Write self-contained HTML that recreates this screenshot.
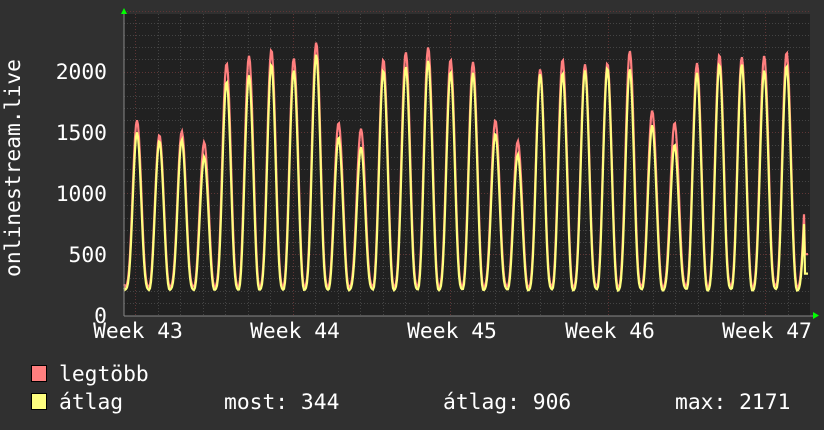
<!DOCTYPE html>
<html><head><meta charset="utf-8"><style>
html,body{margin:0;padding:0;background:#303030;width:824px;height:430px;overflow:hidden}
svg{display:block}
text{font-family:"DejaVu Sans Mono","Liberation Mono",monospace;fill:#fff;font-size:21.3px}
</style></head><body>
<svg id="g" width="824" height="430" xmlns="http://www.w3.org/2000/svg">
<rect x="0" y="0" width="824" height="430" fill="#303030"/>
<rect x="124" y="14" width="686" height="302" fill="#212121"/>
<g id="grid"></g>
<polyline id="red" fill="none" stroke="#ff7f7f" stroke-width="2.2"/>
<polyline id="yel" fill="none" stroke="#ffff7f" stroke-width="2.2"/>
<line x1="124" y1="316" x2="814" y2="316" stroke="#888" stroke-width="1"/>
<line x1="124" y1="316" x2="124" y2="12" stroke="#888" stroke-width="1"/>
<polygon points="121,14 127,14 124,8" fill="#0f0"/>
<polygon points="813,312 813,319 819,315.5" fill="#0f0"/>
<text x="107" y="79" text-anchor="end">2000</text>
<text x="107" y="140" text-anchor="end">1500</text>
<text x="107" y="201" text-anchor="end">1000</text>
<text x="107" y="262" text-anchor="end">500</text>
<text x="107" y="323" text-anchor="end">0</text>
<text transform="translate(20,168) rotate(-90)" text-anchor="middle">onlinestream.live</text>
<text x="138" y="338" text-anchor="middle">Week 43</text>
<text x="295" y="338" text-anchor="middle">Week 44</text>
<text x="452" y="338" text-anchor="middle">Week 45</text>
<text x="610" y="338" text-anchor="middle">Week 46</text>
<text x="767" y="338" text-anchor="middle">Week 47</text>
<rect x="31.5" y="365.5" width="15" height="16" fill="#ff7f7f" stroke="#000"/>
<rect x="31.5" y="393.5" width="15" height="16" fill="#ffff7f" stroke="#000"/>
<text x="59" y="381">legtöbb</text>
<text x="59" y="409">átlag</text>
<text x="224" y="409">most: 344</text>
<text x="443" y="409">átlag: 906</text>
<text x="675" y="409">max: 2171</text>
</svg>
<script>
var ns="http://www.w3.org/2000/svg",g=document.getElementById('grid');
function ln(x1,y1,x2,y2,c){var l=document.createElementNS(ns,'line');l.setAttribute('x1',x1);l.setAttribute('y1',y1);l.setAttribute('x2',x2);l.setAttribute('y2',y2);l.setAttribute('stroke',c);l.setAttribute('stroke-width',1);l.setAttribute('stroke-dasharray','1,2');g.appendChild(l);}
function Y(v){return 315-v*0.1217;}
for(var v=100;v<=2500;v+=100){var y=Math.round(Y(v))+0.5;ln(124,y,810,y,v%500==0?'#5e3535':'#444');}
for(var i=-1;i<32;i++){var x=Math.round(135+i*22.5)+0.5;if(x<125||x>810)continue;ln(x,14,x,316,(i%7==0)?'#5e3535':'#444');}
var peaks=[1600,1480,1510,1420,2070,2130,2180,2110,2240,1580,1530,2100,2160,2200,2100,2080,1600,1430,2020,2100,2060,2070,2170,1680,1580,2070,2140,2120,2130,2160,1500];
var yr=[1500,1430,1440,1300,1920,1970,2060,2010,2140,1460,1380,2010,2040,2090,2000,1990,1490,1320,1980,1990,2010,2030,2020,1560,1400,1990,2060,2060,2010,2050,1400];
var R=[],Yl=[];
for(var x=124;x<=808;x+=1){
 var t=(x-137)/22.4;var d=Math.round(t);var ph=t-d;var idx=Math.max(0,Math.min(30,d));
 var f=Math.pow((1+Math.cos(2*Math.PI*ph))/2,1.4);
 var base=235+12*Math.sin(x*0.7);
 var r=base+(peaks[idx]-base)*f;
 var yy=(base-25)+(yr[idx]-base+25)*Math.pow(f,1.05);
 if(x>=805){r=500;yy=340;}
 R.push(x+','+Y(r).toFixed(1));Yl.push(x+','+Y(yy).toFixed(1));
}
document.getElementById('red').setAttribute('points',R.join(' '));
document.getElementById('yel').setAttribute('points',Yl.join(' '));
</script>
</body></html>
